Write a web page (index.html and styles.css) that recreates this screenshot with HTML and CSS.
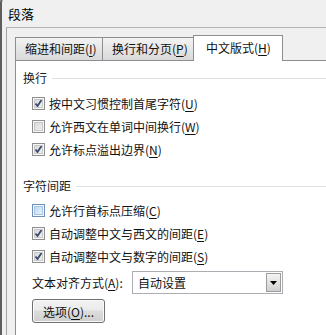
FILE: index.html
```html
<!DOCTYPE html>
<html>
<head>
    <title>段落</title>
    <link rel="stylesheet" href="styles.css">
</head>
<body>
    <div class="dialog">
        <div class="title">段落</div>

        <div class="frame">
            <div class="tabs">
                <div class="tab tab-indent">缩进和间距(<u>I</u>)</div>
                <div class="tab tab-break">换行和分页(<u>P</u>)</div>
                <div class="tab tab-active">中文版式(<u>H</u>)</div>
            </div>

            <div class="panel">
                <div class="group-title">换行</div>
                <div class="options">
                    <div class="option"><span class="cb checked"></span>按中文习惯控制首尾字符(<u>U</u>)</div>
                    <div class="option"><span class="cb"></span>允许西文在单词中间换行(<u>W</u>)</div>
                    <div class="option"><span class="cb checked"></span>允许标点溢出边界(<u>N</u>)</div>
                </div>

                <div class="group-title second">字符间距</div>
                <div class="options">
                    <div class="option"><span class="cb hot"></span>允许行首标点压缩(<u>C</u>)</div>
                    <div class="option"><span class="cb checked"></span>自动调整中文与西文的间距(<u>E</u>)</div>
                    <div class="option"><span class="cb checked"></span>自动调整中文与数字的间距(<u>S</u>)</div>
                </div>

                <div class="align-row">
                    <span class="align-label">文本对齐方式(<u>A</u>):</span>
                    <div class="combo">
                        <span class="combo-value">自动设置</span>
                        <span class="combo-button">
                            <svg width="7" height="4" viewBox="0 0 7 4"><path d="M0 0h7L3.5 4z" fill="#000"/></svg>
                        </span>
                    </div>
                </div>

                <button class="options-button">选项(<u>O</u>)...</button>
            </div>
        </div>
    </div>
</body>
</html>
```

FILE: styles.css
```css
body {
    margin: 0;
    background-color: #f0f0f0;
    font-family: "Noto Sans CJK SC", "Noto Sans", sans-serif;
    font-size: 12px;
    color: #111;
    overflow: hidden;
    height: 335px;
}

u {
    text-decoration-thickness: 1px;
    text-underline-offset: 2px;
}

.dialog {
    box-sizing: border-box;
    display: flex;
    flex-direction: column;
    height: 341px;
    margin-top: -6px;
    padding-top: 4px;
    border-left: 2px solid #5e5e5e;
    border-top: 2px solid #5e5e5e;
    border-top-left-radius: 9px;
}

.title {
    height: 27px;
    line-height: 27px;
    padding-left: 6px;
    font-size: 13px;
    color: #000;
}

.frame {
    flex: 1;
    display: flex;
    flex-direction: column;
    margin-left: 4px;
    border-left: 1px solid #a3a3a3;
    border-top: 1px solid #b4b4b4;
    padding: 7px 0 0 8px;
}

/* tab strip */
.tabs {
    display: flex;
    align-items: flex-end;
    height: 25px;
}

.tab {
    box-sizing: border-box;
    height: 23px;
    line-height: 22px;
    padding-left: 9px;
    border: 1px solid #8c8e94;
    border-bottom: none;
    background: linear-gradient(#f3f3f3, #e6e6e6 50%, #d9d9d9);
    white-space: nowrap;
}

.tab-indent {
    width: 88px;
}

.tab-break {
    width: 92px;
    margin-left: -1px;
}

.tab-active {
    position: relative;
    z-index: 1;
    width: 90px;
    height: 26px;
    margin-left: -1px;
    margin-bottom: -1px;
    padding-left: 12px;
    line-height: 24px;
    background: #fff;
}

/* tab page */
.panel {
    flex: 1;
    background: #fff;
    border-top: 1px solid #8c8e94;
    border-left: 1px solid #8c8e94;
    padding: 9px 0 0 7px;
}

.group-title {
    display: flex;
    align-items: center;
    height: 16px;
    line-height: 16px;
    color: #1a1a1a;
}

.group-title::after {
    content: "";
    flex: 1;
    border-top: 1px solid #dce2e6;
    margin-left: 5px;
    margin-top: 1px;
}

.group-title.second {
    margin-top: 17px;
}

.options {
    margin-top: 6px;
    padding-left: 9px;
}

.group-title.second + .options {
    margin-top: 5px;
}

.option {
    display: flex;
    align-items: center;
    height: 23px;
    white-space: nowrap;
}

.cb {
    box-sizing: border-box;
    width: 13px;
    height: 13px;
    margin-right: 4px;
    border: 1px solid #8f8f8f;
    background: linear-gradient(135deg, #d4d4d4, #f4f4f4);
    box-shadow: inset 0 0 0 1px #f6f6f6, inset 0 0 0 2px #c9c9c9;
}

.cb.hot {
    border-color: #6f8fb8;
    background: linear-gradient(135deg, #b9d6ee, #eef6fc);
    box-shadow: inset 0 0 0 1px #f2f8fd, inset 0 0 0 2px #a9c6e0;
}

.cb.checked {
    background:
        url("data:image/svg+xml,%3Csvg xmlns='http://www.w3.org/2000/svg' width='11' height='11'%3E%3Cpath d='M2.5 5.5l2 2.5 4-6' fill='none' stroke='%23384a70' stroke-width='1.8'/%3E%3C/svg%3E") center no-repeat,
        linear-gradient(135deg, #d4d4d4, #f4f4f4);
}

/* alignment combo */
.align-row {
    display: flex;
    align-items: center;
    margin-top: 3px;
    padding-left: 9px;
}

.align-label {
    width: 100px;
    white-space: nowrap;
}

.combo {
    box-sizing: border-box;
    display: flex;
    align-items: center;
    width: 151px;
    height: 23px;
    border: 1px solid #abadb3;
    background: #fff;
    padding: 1px;
}

.combo-value {
    flex: 1;
    padding-left: 4px;
}

.combo-button {
    box-sizing: border-box;
    display: flex;
    align-items: center;
    justify-content: center;
    width: 15px;
    height: 19px;
    border: 1px solid #9c9c9c;
    background: linear-gradient(#f4f4f4, #e2e2e2 50%, #cfcfcf);
}

.options-button {
    display: block;
    box-sizing: border-box;
    width: 73px;
    height: 24px;
    margin: 5px 0 0 9px;
    padding: 0;
    border: 1px solid #707070;
    border-radius: 3px;
    background: linear-gradient(#f2f2f2, #ebebeb 45%, #dddddd 50%, #cfcfcf);
    box-shadow: inset 0 0 0 1px #fafafa;
    font-family: inherit;
    font-size: 12px;
    color: #111;
}
```
